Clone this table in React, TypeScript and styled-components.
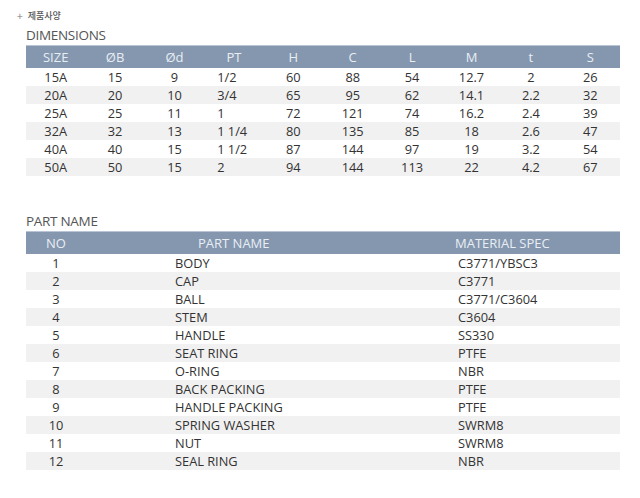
import React from "react";
import styled, { createGlobalStyle } from "styled-components";

const Global = createGlobalStyle`
  html, body { margin: 0; padding: 0; background: #fff; }
  body { font-family: "Open Sans", "Noto Sans", "Noto Sans CJK KR", sans-serif; color: #333; }
`;

const Page = styled.div`
  width: 640px;
  height: 498px;
  padding: 8px 20px 0 26px;
  box-sizing: border-box;
`;

const Crumb = styled.div`
  display: flex;
  align-items: center;
  gap: 5px;
  margin-left: -9px;
  height: 14px;
  font-size: 9px;
  color: #555;
  font-family: "Noto Sans CJK KR", sans-serif;
  font-weight: 500;
`;

const Plus = styled.span`
  color: #999;
  font-size: 10px;
`;

const Title = styled.div<{ $top: number }>`
  margin-top: ${(p) => p.$top}px;
  height: 20px;
  line-height: 20px;
  font-size: 13.5px;
  color: #555;
  letter-spacing: -0.3px;
`;

const Grid = styled.div<{ $cols: string }>`
  display: grid;
  grid-template-columns: ${(p) => p.$cols};
  width: 594px;
`;

const HeadRow = styled.div`
  display: contents;
`;

const HeadCell = styled.div<{ $align?: string; $pad?: number }>`
  height: 23px;
  line-height: 23px;
  background: #8497af;
  border-top: 1px solid #b9c5d4;
  box-sizing: border-box;
  color: #e9eef4;
  font-size: 13px;
  text-align: ${(p) => p.$align || "center"};
  padding-left: ${(p) => p.$pad || 0}px;
  white-space: nowrap;
`;

const Cell = styled.div<{ $alt: boolean; $align?: string; $pad?: number }>`
  height: 18px;
  line-height: 18px;
  font-size: 12.8px;
  color: #333;
  background: ${(p) => (p.$alt ? "#f1f1f1" : "#fff")};
  text-align: ${(p) => p.$align || "center"};
  padding-left: ${(p) => p.$pad || 0}px;
  white-space: nowrap;
`;

const dimHead = ["SIZE", "ØB", "Ød", "PT", "H", "C", "L", "M", "t", "S"];
const dimRows = [
  ["15A", "15", "9", "1/2", "60", "88", "54", "12.7", "2", "26"],
  ["20A", "20", "10", "3/4", "65", "95", "62", "14.1", "2.2", "32"],
  ["25A", "25", "11", "1", "72", "121", "74", "16.2", "2.4", "39"],
  ["32A", "32", "13", "1 1/4", "80", "135", "85", "18", "2.6", "47"],
  ["40A", "40", "15", "1 1/2", "87", "144", "97", "19", "3.2", "54"],
  ["50A", "50", "15", "2", "94", "144", "113", "22", "4.2", "67"],
];

const parts = [
  ["1", "BODY", "C3771/YBSC3"],
  ["2", "CAP", "C3771"],
  ["3", "BALL", "C3771/C3604"],
  ["4", "STEM", "C3604"],
  ["5", "HANDLE", "SS330"],
  ["6", "SEAT RING", "PTFE"],
  ["7", "O-RING", "NBR"],
  ["8", "BACK PACKING", "PTFE"],
  ["9", "HANDLE PACKING", "PTFE"],
  ["10", "SPRING WASHER", "SWRM8"],
  ["11", "NUT", "SWRM8"],
  ["12", "SEAL RING", "NBR"],
];

export default function App() {
  return (
    <>
      <Global />
      <Page>
        <Crumb>
          <Plus>+</Plus>
          <span>제품사양</span>
        </Crumb>
        <Title $top={3}>DIMENSIONS</Title>
        <Grid $cols="repeat(10, 1fr)">
          <HeadRow>
            {dimHead.map((h) => (
              <HeadCell key={h}>{h}</HeadCell>
            ))}
          </HeadRow>
          {dimRows.map((r, i) =>
            r.map((v, j) => (
              <Cell
                key={`${i}-${j}`}
                $alt={i % 2 === 1}
                $align={j === 3 ? "left" : "center"}
                $pad={j === 3 ? 13 : 0}
              >
                {v}
              </Cell>
            ))
          )}
        </Grid>
        <Title $top={35}>PART NAME</Title>
        <Grid $cols="60px 369px 1fr">
          <HeadRow>
            <HeadCell>NO</HeadCell>
            <HeadCell $align="left" $pad={112}>PART NAME</HeadCell>
            <HeadCell $align="left">MATERIAL SPEC</HeadCell>
          </HeadRow>
          {parts.map((p, i) => (
            <React.Fragment key={p[0]}>
              <Cell $alt={i % 2 === 1}>{p[0]}</Cell>
              <Cell $alt={i % 2 === 1} $align="left" $pad={89}>{p[1]}</Cell>
              <Cell $alt={i % 2 === 1} $align="left" $pad={3}>{p[2]}</Cell>
            </React.Fragment>
          ))}
        </Grid>
      </Page>
    </>
  );
}
